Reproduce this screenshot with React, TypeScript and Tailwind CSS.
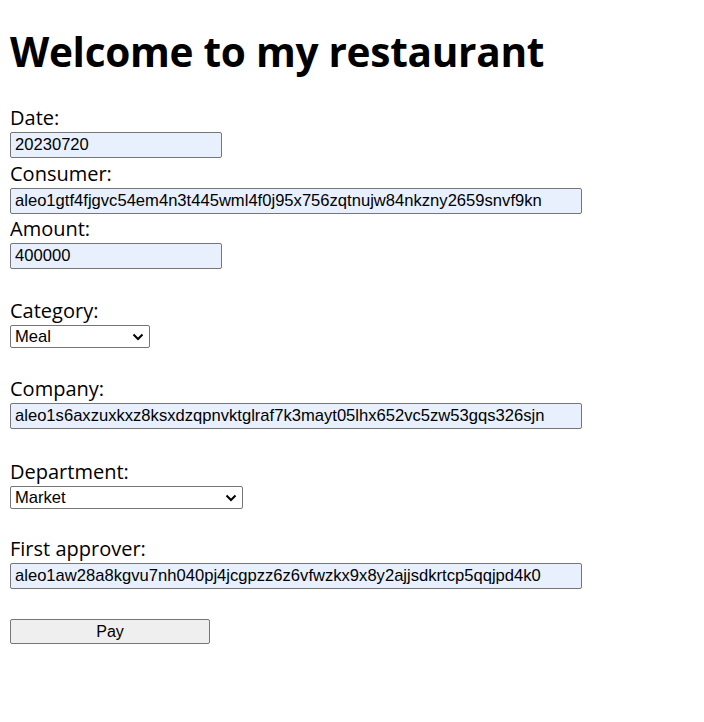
import { useState } from "react";

const Chevron = () => (
  <svg
    width="12"
    height="8"
    viewBox="0 0 12 8"
    className="pointer-events-none absolute right-[6px] top-1/2 -translate-y-1/2"
  >
    <path d="M1.5 1.5 L6 6 L10.5 1.5" fill="none" stroke="#000" strokeWidth="2" />
  </svg>
);

const Label = ({ children }: { children: React.ReactNode }) => (
  <label className="block h-[30px] text-[20px] leading-[30px] pt-[1px]">{children}</label>
);

const TextInput = ({ value, width }: { value: string; width: string }) => {
  const [v, setV] = useState(value);
  return (
    <input
      type="text"
      value={v}
      onChange={(e) => setV(e.target.value)}
      className={`${width} block h-[26px] rounded-[2px] border border-[#767676] bg-[#e8f0fe] px-[4px] text-[16.6px] text-black outline-none`}
      style={{ fontFamily: '"Liberation Sans", Arial, sans-serif' }}
    />
  );
};

const Select = ({ options, width }: { options: string[]; width: string }) => {
  const [v, setV] = useState(options[0]);
  return (
    <div className={`relative ${width}`}>
      <select
        value={v}
        onChange={(e) => setV(e.target.value)}
        className="block h-[23px] w-full appearance-none rounded-[2px] border border-[#767676] bg-white pl-[4px] text-[16.6px] leading-[20px] text-black outline-none"
        style={{ fontFamily: '"Liberation Sans", Arial, sans-serif' }}
      >
        {options.map((o) => (
          <option key={o}>{o}</option>
        ))}
      </select>
      <Chevron />
    </div>
  );
};

export default function App() {
  return (
    <div className="px-[10px] pt-[22px] text-black" style={{ fontFamily: '"Open Sans", "Noto Sans", sans-serif' }}>
      <h1 className="text-[40.6px] font-bold leading-[60px] tracking-[-0.3px]">Welcome to my restaurant</h1>
      <form className="mt-[20px]" onSubmit={(e) => e.preventDefault()}>
        <Label>Date:</Label>
        <TextInput value="20230720" width="w-[212px]" />
        <Label>Consumer:</Label>
        <TextInput value="aleo1gtf4fjgvc54em4n3t445wml4f0j95x756zqtnujw84nkzny2659snvf9kn" width="w-[572px]" />
        <div className="-mt-[1px]">
          <Label>Amount:</Label>
        </div>
        <TextInput value="400000" width="w-[212px]" />

        <div className="mt-[26px]">
          <Label>Category:</Label>
          <Select options={["Meal", "Travel", "Office"]} width="w-[140px]" />
        </div>

        <div className="mt-[25px]">
          <Label>Company:</Label>
          <TextInput value="aleo1s6axzuxkxz8ksxdzqpnvktglraf7k3mayt05lhx652vc5zw53gqs326sjn" width="w-[572px]" />
        </div>

        <div className="mt-[27px]">
          <Label>Department:</Label>
          <Select options={["Market", "Sales", "Engineering"]} width="w-[233px]" />
        </div>

        <div className="mt-[24px]">
          <Label>First approver:</Label>
          <TextInput value="aleo1aw28a8kgvu7nh040pj4jcgpzz6z6vfwzkx9x8y2ajjsdkrtcp5qqjpd4k0" width="w-[572px]" />
        </div>

        <button
          type="submit"
          className="mt-[30px] block h-[25px] w-[200px] rounded-[2px] border border-[#767676] bg-[#efefef] text-[16px] text-black"
          style={{ fontFamily: '"Liberation Sans", Arial, sans-serif' }}
        >
          Pay
        </button>
      </form>
    </div>
  );
}
